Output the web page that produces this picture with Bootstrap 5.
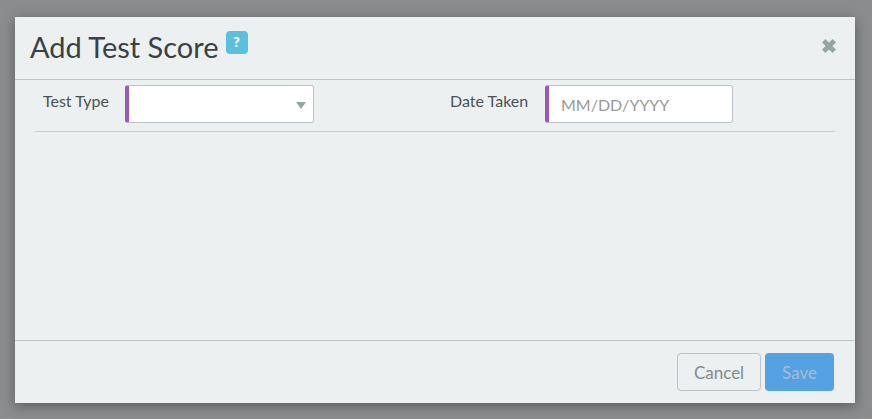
<!DOCTYPE html>
<html lang="en">
<head>
  <meta charset="UTF-8" />
  <meta name="viewport" content="width=device-width, initial-scale=1" />
  <title>Add Test Score</title>
  <link href="https://cdn.jsdelivr.net/npm/bootstrap@5.3.0/dist/css/bootstrap.min.css" rel="stylesheet" />
  <style>
    html, body { height: 100%; }
    body {
      background-color: #8b8c8d;
      font-family: Lato, "Liberation Sans", sans-serif;
      color: #3c4446;
      overflow: hidden;
    }
    .score-dialog {
      width: 840px;
      height: 386px;
      margin: 17px 0 0 15px;
      background-color: #ecf0f1;
      border: 0;
      border-radius: 0;
      box-shadow: 0 3px 12px rgba(0, 0, 0, .35);
    }
    .score-head {
      height: 63px;
      padding: 0 19px 4px 15px;
      border-bottom: 1px solid #bfc5c7;
    }
    .score-title {
      font-size: 29px;
      font-weight: 400;
      line-height: 1;
      color: #3a4143;
      margin: 0;
    }
    .help-tag {
      width: 22px;
      height: 23px;
      margin: -7px 0 0 7px;
      border-radius: 4px;
      background-color: #5bc0de;
      color: #fff;
      font-size: 14px;
      font-weight: 900;
      line-height: 22px;
      text-align: center;
    }
    .score-close {
      width: 14px;
      height: 14px;
      padding: 0;
      border: 0;
      background: none;
      line-height: 0;
    }
    .score-body { padding: 5px 20px 0; }
    .score-row {
      height: 47px;
      border-bottom: 1px solid #c8cdcf;
      padding-bottom: 8px;
    }
    .score-label {
      font-size: 16px;
      line-height: 20px;
      color: #4a5254;
      margin: 0;
      padding-top: 6px;
    }
    .label-type { width: 90px; padding-left: 8px; }
    .label-date { width: 95px; margin-left: 136px; }
    .field-box {
      height: 38px;
      background-color: #fff;
      border: 1px solid #bdc3c7;
      border-left: 4px solid #9b59b6;
      border-radius: 3px;
      font-size: 16px;
    }
    .field-select { width: 189px; }
    .field-date { width: 188px; padding: 0 12px; color: #333; }
    .field-date::placeholder { color: #999; opacity: 1; }
    .field-date:focus { outline: 0; }
    .select-caret {
      position: absolute;
      right: 7px;
      top: 16px;
      width: 0;
      height: 0;
      border-left: 5px solid transparent;
      border-right: 5px solid transparent;
      border-top: 7px solid #95a5a6;
    }
    .score-foot {
      height: 63px;
      padding: 12px 21px 0 0;
      border-top: 1px solid #bfc5c7;
    }
    .btn-cancel, .btn-save {
      height: 38px;
      font-size: 17px;
      line-height: 1;
      border-radius: 4px;
      padding: 0;
    }
    .btn-cancel {
      width: 84px;
      background-color: transparent;
      border: 1px solid #bdc3c7;
      color: #7f8c8d;
    }
    .btn-save {
      width: 69px;
      margin-left: 4px;
      background-color: #55a1e3;
      border: 0;
      color: #a5bdcd;
    }
    .btn-save:disabled { background-color: #55a1e3; color: #a5bdcd; opacity: 1; }
  </style>
</head>
<body>
  <div class="score-dialog d-flex flex-column">
    <div class="score-head d-flex align-items-center justify-content-between flex-shrink-0">
      <div class="d-flex align-items-center">
        <h1 class="score-title">Add Test Score</h1>
        <span class="help-tag">?</span>
      </div>
      <button type="button" class="score-close" aria-label="Close">
        <svg width="14" height="14" viewBox="0 0 14 14"><path d="M3.4 0 7 3.6 10.6 0 14 3.4 10.4 7 14 10.6 10.6 14 7 10.4 3.4 14 0 10.6 3.6 7 0 3.4Z" fill="#95a5a6"/></svg>
      </button>
    </div>
    <div class="score-body flex-grow-1">
      <div class="score-row d-flex align-items-start">
        <label class="score-label label-type">Test Type</label>
        <div class="field-box field-select position-relative">
          <span class="select-caret"></span>
        </div>
        <label class="score-label label-date">Date Taken</label>
        <input type="text" class="field-box field-date" placeholder="MM/DD/YYYY" />
      </div>
    </div>
    <div class="score-foot d-flex justify-content-end align-items-start flex-shrink-0">
      <button type="button" class="btn btn-cancel">Cancel</button>
      <button type="button" class="btn btn-save" disabled>Save</button>
    </div>
  </div>
  <script src="https://cdn.jsdelivr.net/npm/bootstrap@5.3.0/dist/js/bootstrap.bundle.min.js"></script>
</body>
</html>
